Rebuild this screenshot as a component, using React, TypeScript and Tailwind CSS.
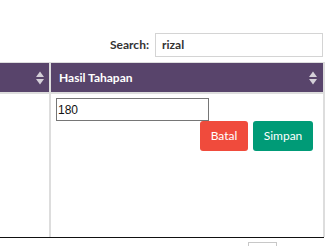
import React from 'react';

function SortIcon() {
  return (
    <svg width="8" height="14" viewBox="0 0 8 14" className="shrink-0">
      <path d="M0 6 L4 0.5 L8 6 Z" fill="#d4d0d8" />
      <path d="M0 8 L8 8 L4 13.5 Z" fill="#d4d0d8" />
    </svg>
  );
}

export default function App() {
  return (
    <div className="w-[331px] h-[246px] bg-white overflow-hidden font-['Lato',sans-serif] text-[#333]">
      <div className="flex items-center justify-end pt-[33px] pr-[8px]">
        <span className="text-[12px] font-bold">Search:</span>
        <div className="ml-[6px] w-[168px] h-[24px] border border-[#d4d4d4] flex items-center px-[6px] text-[12px] font-bold">
          rizal
        </div>
      </div>

      <div className="mt-[5px] w-[325px] grid grid-cols-[49px_272px] grid-rows-[29px_143px] gap-[2px] bg-[#ddd] pt-px pr-[2px]">
        <div className="bg-[#58446b] flex items-center justify-end pr-[5px] pt-px">
          <SortIcon />
        </div>
        <div className="bg-[#58446b] flex items-center justify-between pl-[8px] pr-[6px] pt-px">
          <span className="text-white text-[12px] font-bold">Hasil Tahapan</span>
          <SortIcon />
        </div>

        <div className="bg-white" />
        <div className="bg-white pl-[5px] pt-[4px] pr-[10px]">
          <div className="w-[153px] h-[23px] border border-[#767676] flex items-center pl-[1px] font-['Liberation_Sans',Arial,sans-serif] text-[12px] text-[#111]">
            180
          </div>
          <div className="flex justify-end gap-[5px]">
            <div className="w-[48px] h-[30px] rounded-[3px] bg-[#f04b3c] text-white text-[12px] flex items-center justify-center">
              Batal
            </div>
            <div className="w-[60px] h-[30px] rounded-[3px] bg-[#009b77] text-white text-[12px] flex items-center justify-center">
              Simpan
            </div>
          </div>
        </div>
      </div>

      <div className="w-[324px] h-px bg-[#111]" />
      <div className="mt-[4px] ml-[248px] w-[29px] h-[12px] border border-[#c8c8c8]" />
    </div>
  );
}
